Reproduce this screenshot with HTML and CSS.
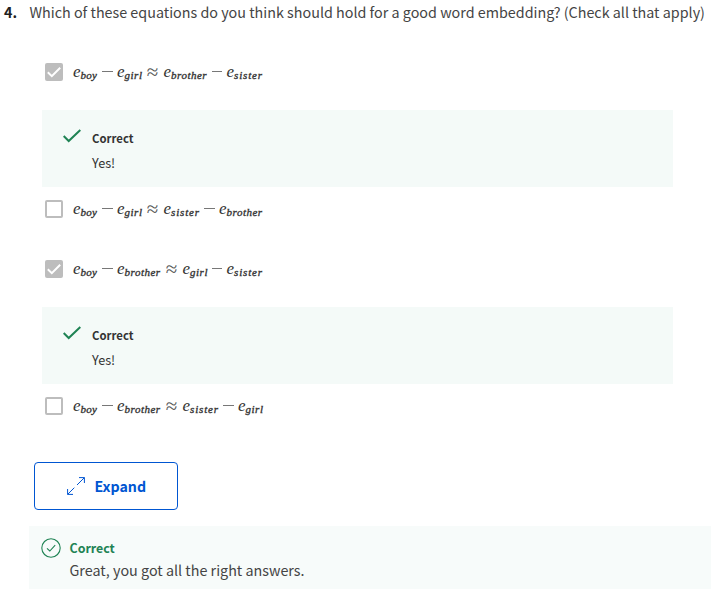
FILE: index.html
```html
<!DOCTYPE html>
<html lang="en">
<head>
<meta charset="utf-8">
<title>Word embeddings quiz</title>
<link rel="stylesheet" href="styles.css">
</head>
<body>
<main class="question">
  <h1 class="prompt"><b class="number">4.</b><span class="prompt-text">Which of these equations do you think should hold for a good word embedding? (Check all that apply)</span></h1>

  <div class="option first">
    <svg class="box" viewBox="0 0 18 18"><rect width="18" height="18" rx="2" fill="#bdbdbd"/><path d="M2.8 9.3 6.8 13.1 15.2 4.8" fill="none" stroke="#fff" stroke-width="2"/></svg>
    <div class="math"><span class="term boy">e<sub>boy</sub></span><span class="minus"></span><span class="term girl">e<sub>girl</sub></span><span class="approx">≈</span><span class="term brother">e<sub>brother</sub></span><span class="minus"></span><span class="term sister">e<sub>sister</sub></span></div>
  </div>
  <section class="feedback">
    <svg class="tick" viewBox="0 0 18 14"><path d="M.7 7 5.7 12 17.3 1" fill="none" stroke="#1f8354" stroke-width="2"/></svg>
    <div><strong>Correct</strong><p>Yes!</p></div>
  </section>
  <div class="option">
    <svg class="box" viewBox="0 0 18 18"><rect x="1" y="1" width="16" height="16" rx="1" fill="#fff" stroke="#bdbdbd" stroke-width="2"/></svg>
    <div class="math"><span class="term boy">e<sub>boy</sub></span><span class="minus"></span><span class="term girl">e<sub>girl</sub></span><span class="approx">≈</span><span class="term sister">e<sub>sister</sub></span><span class="minus"></span><span class="term brother">e<sub>brother</sub></span></div>
  </div>
  <div class="option">
    <svg class="box" viewBox="0 0 18 18"><rect width="18" height="18" rx="2" fill="#bdbdbd"/><path d="M2.8 9.3 6.8 13.1 15.2 4.8" fill="none" stroke="#fff" stroke-width="2"/></svg>
    <div class="math"><span class="term boy">e<sub>boy</sub></span><span class="minus"></span><span class="term brother">e<sub>brother</sub></span><span class="approx">≈</span><span class="term girl">e<sub>girl</sub></span><span class="minus"></span><span class="term sister">e<sub>sister</sub></span></div>
  </div>
  <section class="feedback">
    <svg class="tick" viewBox="0 0 18 14"><path d="M.7 7 5.7 12 17.3 1" fill="none" stroke="#1f8354" stroke-width="2"/></svg>
    <div><strong>Correct</strong><p>Yes!</p></div>
  </section>
  <div class="option">
    <svg class="box" viewBox="0 0 18 18"><rect x="1" y="1" width="16" height="16" rx="1" fill="#fff" stroke="#bdbdbd" stroke-width="2"/></svg>
    <div class="math"><span class="term boy">e<sub>boy</sub></span><span class="minus"></span><span class="term brother">e<sub>brother</sub></span><span class="approx">≈</span><span class="term sister">e<sub>sister</sub></span><span class="minus"></span><span class="term girl">e<sub>girl</sub></span></div>
  </div>

  <button class="expand" type="button">
    <svg class="arrows" viewBox="0 0 18 18"><path d="M.6 17.4 7.3 10.7M10 8 17.4.6M12 .6h5.4V6M.6 12v5.4H6" fill="none" stroke="#0056d2"/></svg>
    <span>Expand</span>
  </button>

  <section class="result">
    <svg class="badge" viewBox="0 0 20 20"><circle cx="10" cy="10" r="9.2" fill="none" stroke="#1f8354" stroke-width="1.1"/><path d="M6 10.3 8.8 13 14.2 7.2" fill="none" stroke="#1f8354" stroke-width="1.1"/></svg>
    <div><strong>Correct</strong><p>Great, you got all the right answers.</p></div>
  </section>
</main>
</body>
</html>
```
FILE: styles.css
```css
* { box-sizing: border-box; }
body {
  margin: 0;
  background: #fff;
  color: #333;
  font-family: "Noto Sans CJK SC", "Open Sans", sans-serif;
  overflow: hidden;
}
svg { display: block; flex: none; }
p { margin: 0; }
.question { height: 589px; overflow: hidden; }
.prompt {
  display: flex;
  margin: 0;
  padding-left: 4px;
  height: 26px;
  line-height: 24px;
  font-size: 14.33px;
  font-weight: 400;
  white-space: nowrap;
}
.number { flex: none; width: 25.5px; color: #1f1f1f; }
.prompt-text { color: #444; }
.option {
  display: flex;
  align-items: flex-start;
  height: 60px;
  margin-left: 45px;
  padding-top: 13px;
}
.option.first { margin-top: 24px; }
.box { width: 18px; height: 18px; }
.math {
  display: flex;
  height: 24px;
  margin-left: 10px;
  line-height: 18px;
  font-family: "Liberation Serif", serif;
  font-size: 17px;
  font-style: italic;
  white-space: nowrap;
}
.term { display: flex; }
.term sub {
  font-size: 11px;
  line-height: 25px;
  vertical-align: baseline;
  -webkit-text-stroke: .35px #333;
}
.boy { width: 24.5px; }
.girl { width: 24.5px; }
.brother { width: 43.5px; }
.sister { width: 36px; }
.boy sub { letter-spacing: .2px; }
.girl sub { letter-spacing: .5px; }
.brother sub { letter-spacing: .5px; }
.sister sub { letter-spacing: .85px; }
.minus { width: 19.5px; padding: 8px 4.5px 0 4.5px; }
.minus::before { content: ""; display: block; height: 1px; background: #777; }
.approx { width: 22px; text-align: center; font-style: normal; font-size: 21px; line-height: 18px; color: #555; }
.feedback {
  display: flex;
  width: 631px;
  height: 77px;
  margin-left: 42px;
  padding: 17px 0 0 21px;
  background: #f4faf8;
  font-size: 12.7px;
  line-height: 24px;
}
.feedback strong { display: block; height: 24px; font-size: 11.35px; line-height: 23px; }
.tick { width: 18px; height: 14px; margin: 2px 11px 0 0; }
.expand {
  display: flex;
  align-items: center;
  width: 144px;
  height: 48px;
  margin: 18px 0 0 34px;
  padding: 0 0 0 32px;
  gap: 9.5px;
  border: 1px solid #0056d2;
  border-radius: 4px;
  background: #fff;
  color: #0056d2;
  font: 700 14.2px/24px "Noto Sans CJK SC", sans-serif;
}
.arrows { width: 18px; height: 18px; }
.result {
  display: flex;
  height: 63px;
  margin: 16px 0 0 29px;
  padding: 12px 0 0 12px;
  background: #f7fbfa;
  font-size: 14.34px;
  line-height: 24px;
}
.badge { width: 20px; height: 20px; margin-right: 8.5px; }
.result p { color: #444; }
.result strong { display: block; color: #1f8354; font-size: 12.4px; line-height: 20px; }
```
